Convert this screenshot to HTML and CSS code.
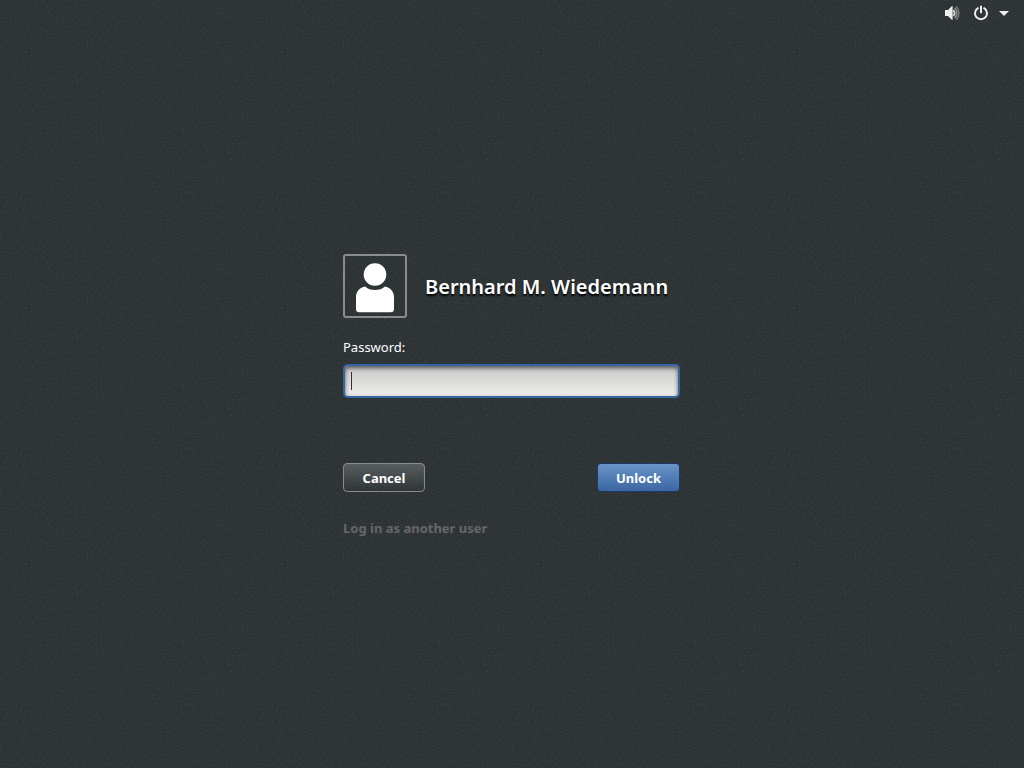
FILE: index.html
```html
<!DOCTYPE html>
<html lang="en">
<head>
<meta charset="utf-8">
<meta name="viewport" content="width=device-width, initial-scale=1">
<title>Unlock</title>
<link rel="stylesheet" href="styles.css">
</head>
<body class="screen">
<header class="top-bar">
  <button class="status volume" type="button" aria-label="Volume">
    <svg width="16" height="16" viewBox="0 0 16 16" fill="none">
      <path fill="#eeeeec" d="M1 5h3l4-4h.6v14H8l-4-4H1z"/>
      <path stroke="#d4d6d6" stroke-width="1.800" stroke-linecap="round" d="M9.600 5.600a3.600 3.600 0 0 1 0 4.800"/>
      <path stroke="#8d9091" stroke-width="1.600" stroke-linecap="round" d="M11 3.400a6.600 6.600 0 0 1 0 9.200"/>
      <path stroke="#74787a" stroke-width="1.600" stroke-linecap="round" d="M12.600 1.800a9.400 9.400 0 0 1 0 12.400"/>
    </svg>
  </button>
  <button class="status power" type="button" aria-label="Power">
    <svg width="16" height="16" viewBox="0 0 16 16" fill="none" stroke="#eeeeec" stroke-width="2" stroke-linecap="round">
      <path d="M4.900 3.200a6 6 0 1 0 6.200 0M8 1.600v6"/>
    </svg>
  </button>
  <button class="status menu" type="button" aria-label="System menu">
    <svg width="10" height="5" viewBox="0 0 10 5"><path fill="#eeeeec" d="M0 0h10L5 5z"/></svg>
  </button>
</header>
<main class="stage">
  <form class="unlock">
    <div class="user">
      <div class="avatar">
        <svg width="60" height="60" viewBox="0 0 60 60" fill="#fff">
          <circle cx="30" cy="18.500" r="11.300"/>
          <path d="M20 30.400c2.600 2.300 6 3.600 10 3.600s7.400-1.300 10-3.600c5 .8 9 5 9 10.600v12q0 3.300-3.300 3.300H14.300Q11 56.300 11 53V41c0-5.600 4-9.800 9-10.600z"/>
        </svg>
      </div>
      <h1 class="name">Bernhard M. Wiedemann</h1>
    </div>
    <label class="label" for="password">Password:</label>
    <div class="field">
      <input class="entry" id="password" type="password">
      <span class="caret"></span>
    </div>
    <div class="actions">
      <button class="button cancel" type="button">Cancel</button>
      <button class="button primary" type="submit">Unlock</button>
    </div>
    <a class="switch" href="#">Log in as another user</a>
  </form>
</main>
</body>
</html>
```

FILE: styles.css
```css
* { box-sizing: border-box; }

.screen {
  margin: 0;
  min-height: 100vh;
  display: flex;
  flex-direction: column;
  color: #fff;
  font-family: "Noto Sans", "Open Sans", sans-serif;
  font-size: 13px;
  background-color: #2d3335;
  background-image: url("data:image/svg+xml,%3Csvg xmlns='http://www.w3.org/2000/svg' width='256' height='256'%3E%3Cfilter id='n' x='0' y='0' width='1' height='1'%3E%3CfeTurbulence type='fractalNoise' baseFrequency='.8' numOctaves='2' stitchTiles='stitch'/%3E%3CfeColorMatrix values='0 0 0 0 1 0 0 0 0 1 0 0 0 0 1 .5 0 0 0 -.24'/%3E%3C/filter%3E%3Crect width='256' height='256' filter='url(%23n)' opacity='.35'/%3E%3C/svg%3E");
}

.top-bar {
  height: 26px;
  padding-right: 15px;
  display: flex;
  justify-content: flex-end;
  align-items: center;
}

.status {
  display: flex;
  padding: 0;
  border: 0;
  background: none;
}

.power { margin: 0 10px 0 13px; }

.stage {
  flex: 1;
  display: flex;
  flex-direction: column;
  align-items: center;
  justify-content: center;
  padding: 0 17px 2px 16px;
}

.unlock {
  width: 100%;
  max-width: 337px;
  display: flex;
  flex-direction: column;
}

.user {
  display: flex;
  align-items: center;
  gap: 18px;
}

.avatar {
  display: flex;
  border: 2px solid #8b8b8b;
  border-radius: 3px;
}

.name {
  margin: 0;
  padding-top: 2px;
  font-size: 20px;
  line-height: 28px;
  font-weight: 600;
  white-space: nowrap;
  text-shadow: 0 2px 2px #000;
}

.label {
  margin-top: 19px;
  line-height: 20px;
}

.field {
  position: relative;
  margin-top: 7px;
}

.entry {
  display: block;
  width: 100%;
  height: 34px;
  padding: 0 6px;
  border: 2px solid #3465a4;
  border-radius: 5px;
  outline: 0;
  color: #2e3436;
  font: inherit;
  background: linear-gradient(#c8c8c8, #eeeeec);
  box-shadow: inset 0 2px 4px rgba(0, 0, 0, .6);
}

.caret {
  position: absolute;
  left: 8px;
  top: 8px;
  width: 1px;
  height: 18px;
  background: #2e3436;
}

.actions {
  display: flex;
  justify-content: space-between;
  margin-top: 65px;
}

.button {
  width: 82px;
  height: 29px;
  padding: 0;
  border: 1px solid #8b8b8b;
  border-radius: 4px;
  color: #fff;
  font: inherit;
  font-weight: 700;
}

.cancel { background: linear-gradient(rgba(255, 255, 255, .2), rgba(255, 255, 255, 0)); }

.primary {
  width: 83px;
  border-color: #1c3a66;
  background: linear-gradient(#6a94c8, #3a67a3);
}

.switch {
  align-self: flex-start;
  margin-top: 26px;
  line-height: 20px;
  font-weight: 700;
  color: #666;
  text-decoration: none;
}
```
